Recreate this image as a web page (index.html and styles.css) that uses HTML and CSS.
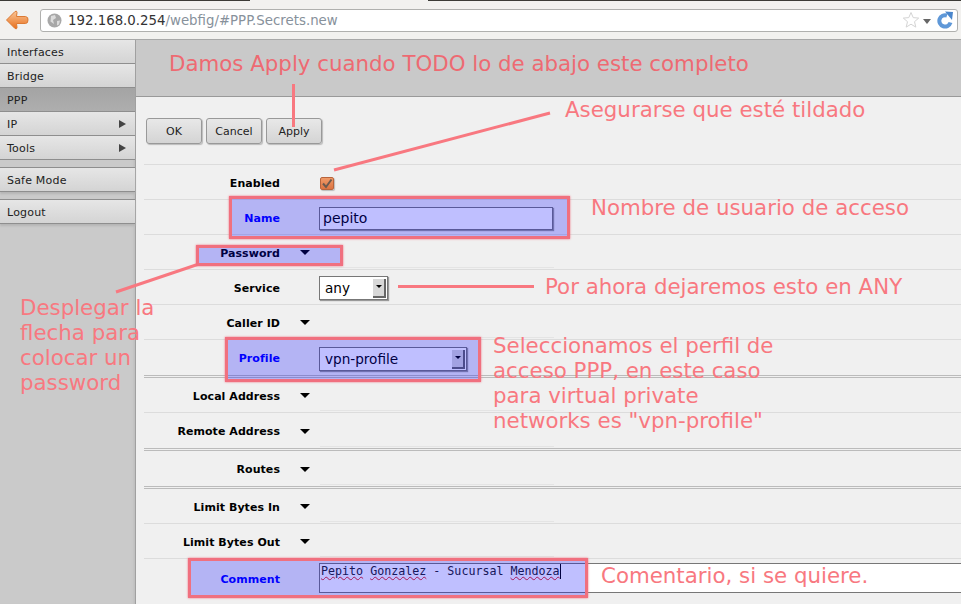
FILE: index.html
```html
<!DOCTYPE html>
<html lang="en">
<head>
    <meta charset="UTF-8">
    <title>PPP Secrets</title>
    <link rel="stylesheet" href="styles.css">
</head>
<body>
    <div class="toolbar">
        <svg class="back" width="35" height="24" viewBox="0 0 35 24">
            <defs>
                <linearGradient id="arrowFill" x1="0" y1="0" x2="0" y2="1">
                    <stop offset="0" stop-color="#f9c596"/>
                    <stop offset="1" stop-color="#e86f1c"/>
                </linearGradient>
            </defs>
            <path d="M1.500 12 L10 3.500 Q12 2.500 12 4.500 L11.500 8.500 L20.500 8.500 Q23.500 9 23 12 Q23 15.500 20.500 15.500 L11.500 15.500 L12 19.500 Q12 21.500 10 20.500 Z" fill="url(#arrowFill)" stroke="#dc7a34"/>
        </svg>
        <div class="urlbar">
            <svg class="globe" width="15" height="15" viewBox="0 0 15 15">
                <circle cx="7.500" cy="7.500" r="7" fill="#a8a8a8"/>
                <path d="M4 3 L8 2 L9 5 L6 7 L7 11 L3.500 8.500 Z M10 8 L13 7.500 L12 11.500 L10 12.500 Z" fill="#dcdcdc"/>
            </svg>
            <span class="host">192.168.0.254</span><span class="path">/webfig/#PPP.Secrets.new</span>
            <svg class="star" width="18" height="18" viewBox="0 0 18 18">
                <path d="M9 1.500 L11.200 6.600 L16.700 7.100 L12.500 10.700 L13.800 16.100 L9 13.200 L4.200 16.100 L5.500 10.700 L1.300 7.100 L6.800 6.600 Z" fill="#fff" stroke="#d4d4d4"/>
            </svg>
            <span class="drop"></span>
            <svg class="reload" width="18" height="18" viewBox="0 0 18 18">
                <path d="M15.500 11.500 A5.700 5.700 0 1 1 12 4.500" fill="none" stroke="#5f98d8" stroke-width="4"/>
                <path d="M10 0.500 L18 1 L17 9 Z" fill="#4a86cc"/>
            </svg>
        </div>
    </div>

    <div class="app">
        <div class="sidebar">
            <a class="item">Interfaces</a>
            <a class="item">Bridge</a>
            <a class="item active">PPP</a>
            <a class="item more">IP</a>
            <a class="item more">Tools</a>
            <a class="item sep">Safe Mode</a>
            <a class="item sep">Logout</a>
        </div>

        <div class="content">
            <div class="header"></div>
            <div class="actions">
                <button>OK</button>
                <button>Cancel</button>
                <button>Apply</button>
            </div>

            <div class="form">
                <div class="row">
                    <label>Enabled</label>
                    <div class="field"><span class="check"><svg width="14" height="14" viewBox="0 0 14 14"><path d="M3 6.500 L6 10 L11.500 2.500" fill="none" stroke="#6b5a50" stroke-width="2"/></svg></span></div>
                </div>
                <div class="row">
                    <label class="changed">Name</label>
                    <div class="field"><input class="text" type="text" value="pepito" readonly></div>
                </div>
                <div class="row">
                    <label>Password</label>
                    <span class="toggle"></span>
                    <span class="empty"></span>
                </div>
                <div class="row">
                    <label>Service</label>
                    <div class="field"><span class="select small">any<i></i></span></div>
                </div>
                <div class="row">
                    <label>Caller ID</label>
                    <span class="toggle"></span>
                    <span class="empty"></span>
                </div>
                <div class="row profile">
                    <label class="changed">Profile</label>
                    <div class="field"><span class="select wide">vpn-profile<i></i></span></div>
                </div>
                <div class="row group">
                    <label>Local Address</label>
                    <span class="toggle"></span>
                    <span class="empty"></span>
                </div>
                <div class="row profile">
                    <label>Remote Address</label>
                    <span class="toggle"></span>
                    <span class="empty"></span>
                </div>
                <div class="row group tall">
                    <label>Routes</label>
                    <span class="toggle"></span>
                    <span class="empty"></span>
                </div>
                <div class="row group">
                    <label>Limit Bytes In</label>
                    <span class="toggle"></span>
                    <span class="empty"></span>
                </div>
                <div class="row">
                    <label>Limit Bytes Out</label>
                    <span class="toggle"></span>
                    <span class="empty"></span>
                </div>
                <div class="row comment">
                    <label class="changed">Comment</label>
                    <div class="field"><div class="area"><span class="typo">Pepito</span> <span class="typo">Gonzalez</span> - Sucursal <span class="typo">Mendoza</span><b class="caret"></b></div></div>
                </div>
            </div>
        </div>
    </div>

    <!-- annotations drawn on top of the screenshot -->
    <svg class="strokes" width="961" height="604" viewBox="0 0 961 604">
        <path d="M293.500 84 L293.500 127"/>
        <path d="M334 170 L550 113"/>
        <path d="M199 264 L116 292"/>
        <path d="M398 286.500 L534 286.500"/>
    </svg>
    <div class="mark" id="mark-name"></div>
    <div class="mark" id="mark-password"></div>
    <div class="mark" id="mark-profile"></div>
    <div class="mark" id="mark-comment"></div>

    <div class="note dark" id="note-apply">Damos Apply cuando TODO lo de abajo este completo</div>
    <div class="note" id="note-check">Asegurarse que esté tildado</div>
    <div class="note" id="note-user">Nombre de usuario de acceso</div>
    <div class="note" id="note-any">Por ahora dejaremos esto en ANY</div>
    <div class="note" id="note-pass">Desplegar la<br>flecha para<br>colocar un<br>password</div>
    <div class="note" id="note-profile">Seleccionamos el perfil de<br>acceso PPP, en este caso<br>para virtual private<br>networks es "vpn-profile"</div>
    <div class="note" id="note-comment">Comentario, si se quiere.</div>
</body>
</html>
```
FILE: styles.css
```css
* {
    box-sizing: border-box;
}
html, body {
    margin: 0;
    height: 100%;
    overflow: hidden;
}
body {
    position: relative;
    font-family: "DejaVu Sans", sans-serif;
    background: #f0f0f0;
}

/* browser bar */
.toolbar {
    height: 40px;
    padding: 1px 0 0 5px;
    display: flex;
    align-items: center;
    background: linear-gradient(90deg, #3c3b37 250px, #f2f1ef 250px, #f2f1ef 428px, #3c3b37 428px) top / 100% 1px no-repeat, #f2f1ef;
    border-bottom: 1px solid #a8a8a8;
}
.back {
    flex: none;
}
.urlbar {
    flex: 1;
    height: 23px;
    margin-right: 3px;
    display: flex;
    align-items: center;
    padding: 0 4px 0 6px;
    background: #fff;
    border: 1px solid #b0b0ae;
    border-radius: 3px;
    font-size: 13.33px;
}
.globe {
    margin-right: 6px;
}
.host {
    color: #333;
}
.path {
    color: #87919b;
}
.star {
    margin-left: auto;
}
.drop {
    width: 0;
    height: 0;
    margin: 2px 4px 0 3px;
    border-left: 4px solid transparent;
    border-right: 4px solid transparent;
    border-top: 5px solid #666;
}

.app {
    display: flex;
    height: 564px;
}

/* left menu */
.sidebar {
    width: 136px;
    flex: none;
    background: #cacaca;
    border-right: 1px solid #a0a0a0;
    box-shadow: inset -3px 0 3px -2px #bbb;
    font-size: 11px;
}
.item {
    display: block;
    height: 24px;
    line-height: 26px;
    padding-left: 7px;
    color: #222;
    letter-spacing: 0.2px;
    background: linear-gradient(#e6e6e6, #d4d4d4);
    border-bottom: 1px solid #8e8e8e;
    position: relative;
}
.item.active {
    background: linear-gradient(#a4a4a4, #aeaeae);
}
.item.more::after {
    content: "";
    position: absolute;
    right: 9px;
    top: 8px;
    border-left: 7px solid #444;
    border-top: 4px solid transparent;
    border-bottom: 4px solid transparent;
}
.item.sep {
    height: 25px;
    margin-top: 7px;
    border-top: 1px solid #8e8e8e;
    box-shadow: 0 2px 2px #b4b4b4;
}

/* main */
.content {
    flex: 1;
    min-width: 0;
}
.header {
    height: 57px;
    background: #c9c9c9;
    border-bottom: 1px solid #999;
}
.actions {
    display: flex;
    gap: 4px;
    padding: 21px 0 20px 10px;
}
.actions button {
    width: 56px;
    height: 26px;
    padding: 0;
    font: 11px "DejaVu Sans", sans-serif;
    color: #222;
    background: linear-gradient(#e8e8e8, #d4d4d4);
    border: 1px solid #999;
    border-radius: 3px;
    box-shadow: 1px 1px 1px #bbb;
}

/* form */
.form {
    margin-left: 8px;
}
.row {
    display: flex;
    align-items: center;
    height: 35px;
    padding-top: 2px;
    border-top: 1px solid #dcdcdc;
    position: relative;
    font-size: 11px;
}
.row.profile {
    height: 36px;
}
.row.group {
    height: 37px;
    border-top: 3px double #bbb;
}
.row.group.tall {
    height: 38px;
}
.row.comment {
    height: 45px;
    padding: 0 0 4px;
}
.row label {
    width: 136px;
    flex: none;
    text-align: right;
    font-weight: bold;
    color: #000;
    letter-spacing: 0.06px;
}
.row label.changed {
    color: #0000ff;
}
.field {
    margin-left: 39px;
}
.toggle {
    margin-left: 20px;
    margin-bottom: 1px;
    width: 0;
    height: 0;
    border-left: 5px solid transparent;
    border-right: 5px solid transparent;
    border-top: 5px solid #000;
}
.empty {
    position: absolute;
    left: 176px;
    bottom: 1px;
    width: 234px;
    border-bottom: 1px solid #e4e4e4;
}
.check {
    display: block;
    width: 14px;
    height: 13px;
    margin-left: 1px;
    background: linear-gradient(#f09a68, #dc7442);
    border: 1px solid #b8643c;
    border-radius: 2px;
    box-shadow: 1px 1px 1px #bbb;
}
.check svg {
    display: block;
    margin: -1px;
}
.text {
    display: block;
    width: 234px;
    height: 23px;
    padding: 0 3px;
    font: 14px "DejaVu Sans", sans-serif;
    color: #000;
    background: #fff;
    border: 1px solid #777;
    box-shadow: 1px 1px 1px #999;
}
.select {
    display: block;
    position: relative;
    height: 24px;
    line-height: 23px;
    padding-left: 5px;
    font-size: 13.6px;
    color: #000;
    background: #fff;
    border: 1px solid #777;
    box-shadow: 1px 1px 1px #999;
}
.select.small {
    width: 69px;
}
.select.wide {
    width: 148px;
}
.select i {
    position: absolute;
    right: 1px;
    top: 2px;
    width: 13px;
    height: 19px;
    background: #d8d8d8;
    border-right: 2px solid #666;
    border-bottom: 2px solid #666;
}
.select i::after {
    content: "";
    position: absolute;
    left: 3px;
    top: 6px;
    border-left: 3px solid transparent;
    border-right: 3px solid transparent;
    border-top: 3px solid #000;
}
.area {
    width: 660px;
    height: 30px;
    margin-bottom: 3px;
    padding: 0 1px;
    font: 11.66px/15px "DejaVu Sans Mono", monospace;
    background: #fff;
    border: 1px solid #777;
    color: #222;
    white-space: nowrap;
}
.typo {
    text-decoration: underline wavy #e02020 1px;
}
.caret {
    display: inline-block;
    width: 1px;
    height: 15px;
    vertical-align: top;
    background: #000;
}

/* annotations */
.strokes {
    position: absolute;
    left: 0;
    top: 0;
    pointer-events: none;
}
.strokes path {
    fill: none;
    stroke: #f87880;
    stroke-width: 3;
}
.mark {
    position: absolute;
    background: rgba(0, 0, 255, 0.25);
    border: 3px solid #f0707f;
    box-shadow: 0 0 2px #f0707f;
}
#mark-name {
    left: 229px;
    top: 196px;
    width: 341px;
    height: 43px;
}
#mark-password {
    left: 196px;
    top: 245px;
    width: 147px;
    height: 21px;
}
#mark-profile {
    left: 225px;
    top: 337px;
    width: 256px;
    height: 45px;
}
#mark-comment {
    left: 188px;
    top: 558px;
    width: 400px;
    height: 40px;
}
.note {
    position: absolute;
    font-size: 21.33px;
    line-height: 25px;
    color: #f87880;
    white-space: nowrap;
}
.note.dark {
    color: #ee6a72;
}
#note-apply {
    left: 169px;
    top: 51px;
}
#note-check {
    left: 565px;
    top: 97px;
}
#note-user {
    left: 591px;
    top: 195px;
}
#note-any {
    left: 545px;
    top: 274px;
}
#note-pass {
    left: 20px;
    top: 295px;
}
#note-profile {
    left: 493px;
    top: 333px;
}
#note-comment {
    left: 601px;
    top: 563px;
}
```
